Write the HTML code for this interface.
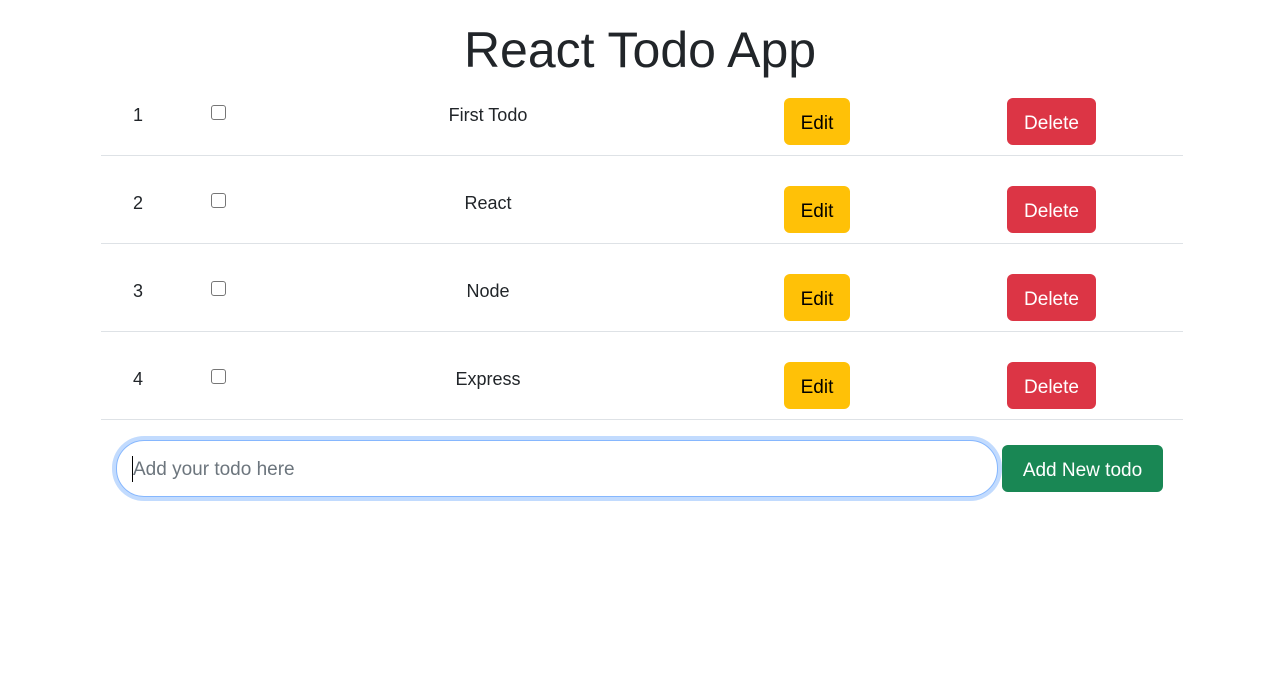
<!DOCTYPE html>
<html><head><style>
body{margin:0;width:1280px;height:698px;background:#fff;font-family:"Liberation Sans",sans-serif;color:#212529;position:relative;overflow:hidden}
.a{position:absolute}
h1{position:absolute;top:18px;left:0;width:1280px;text-align:center;margin:0;font-size:50px;font-weight:500;line-height:64px}
.n{font-size:18px;width:20px;text-align:center;left:128px}
.cb{left:211px;width:13px;height:13px;border:1px solid #767676;border-radius:3px}
.t{left:388px;width:200px;text-align:center;font-size:18px}
.btn{height:47px;border-radius:6px;font-size:19px;line-height:51px;text-align:center}
.e{left:784px;width:66px;background:#ffc107;color:#000}
.d{left:1007px;width:89px;background:#dc3545;color:#fff}
.hr{left:101px;width:1082px;height:1px;background:#dee2e6}
</style></head><body>
<h1>React Todo App</h1>

<div class="a n" style="top:105px">1</div><div class="a cb" style="top:105px"></div><div class="a t" style="top:105px">First Todo</div>
<div class="a btn e" style="top:98px">Edit</div><div class="a btn d" style="top:98px">Delete</div><div class="a hr" style="top:155px"></div>

<div class="a n" style="top:193px">2</div><div class="a cb" style="top:193px"></div><div class="a t" style="top:193px">React</div>
<div class="a btn e" style="top:186px">Edit</div><div class="a btn d" style="top:186px">Delete</div><div class="a hr" style="top:243px"></div>

<div class="a n" style="top:281px">3</div><div class="a cb" style="top:281px"></div><div class="a t" style="top:281px">Node</div>
<div class="a btn e" style="top:274px">Edit</div><div class="a btn d" style="top:274px">Delete</div><div class="a hr" style="top:331px"></div>

<div class="a n" style="top:369px">4</div><div class="a cb" style="top:369px"></div><div class="a t" style="top:369px">Express</div>
<div class="a btn e" style="top:362px">Edit</div><div class="a btn d" style="top:362px">Delete</div><div class="a hr" style="top:419px"></div>

<div class="a" style="left:116px;top:440px;width:880px;height:55px;border:1px solid #86b7fe;border-radius:28px;box-shadow:0 0 0 4px #c2dbfe;background:#fff"></div>
<div class="a" style="left:132px;top:456px;width:1px;height:26px;background:#000"></div>
<div class="a" style="left:133px;top:459px;font-size:19px;color:#6c757d">Add your todo here</div>
<div class="a btn" style="left:1002px;top:445px;width:161px;background:#198754;color:#fff">Add New todo</div>
</body></html>
